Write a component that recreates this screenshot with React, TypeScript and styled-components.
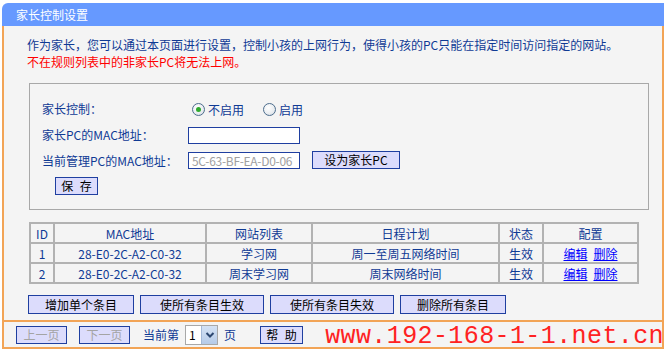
import styled, { createGlobalStyle } from 'styled-components';

const GlobalStyle = createGlobalStyle`
  html, body {
    margin: 0;
    padding: 0;
    background: #ffffff;
  }
  body {
    font-family: 'Noto Sans CJK SC', 'Liberation Sans', sans-serif;
    font-size: 12px;
  }
`;

const ORANGE = '#F2A456';
const TEXT_BLUE = '#0F3A94';

interface Rule {
  id: number;
  mac: string;
  site: string;
  schedule: string;
  status: string;
}

const rules: Rule[] = [
  { id: 1, mac: '28-E0-2C-A2-C0-32', site: '学习网', schedule: '周一至周五网络时间', status: '生效' },
  { id: 2, mac: '28-E0-2C-A2-C0-32', site: '周末学习网', schedule: '周末网络时间', status: '生效' },
];

function Radio({ checked, label }: { checked: boolean; label: string }) {
  return (
    <RadioLabel>
      <RadioDot $checked={checked} />
      {label}
    </RadioLabel>
  );
}

export default function App() {
  return (
    <>
      <GlobalStyle />
      <Frame>
        <Header>家长控制设置</Header>
        <Content>
          <Intro>
            <div>作为家长，您可以通过本页面进行设置，控制小孩的上网行为，使得小孩的PC只能在指定时间访问指定的网站。</div>
            <Warning>不在规则列表中的非家长PC将无法上网。</Warning>
          </Intro>

          <SettingsBox>
            <FieldRow>
              <FieldLabel>家长控制：</FieldLabel>
              <RadioGroup>
                <Radio checked label="不启用" />
                <Radio checked={false} label="启用" />
              </RadioGroup>
            </FieldRow>
            <FieldRow>
              <FieldLabel>家长PC的MAC地址：</FieldLabel>
              <TextInput />
            </FieldRow>
            <FieldRow>
              <FieldLabel>当前管理PC的MAC地址：</FieldLabel>
              <TextInput $disabled>5C-63-BF-EA-D0-06</TextInput>
              <Button $width={88} $gap={12}>设为家长PC</Button>
            </FieldRow>
            <SaveRow>
              <Button $width={43} $spaced>保 存</Button>
            </SaveRow>
          </SettingsBox>

          <RuleTable>
            <colgroup>
              <col style={{ width: 24 }} />
              <col style={{ width: 152 }} />
              <col style={{ width: 106 }} />
              <col style={{ width: 187 }} />
              <col style={{ width: 44 }} />
              <col style={{ width: 95 }} />
            </colgroup>
            <thead>
              <tr>
                <Cell>ID</Cell>
                <Cell>MAC地址</Cell>
                <Cell>网站列表</Cell>
                <Cell>日程计划</Cell>
                <Cell>状态</Cell>
                <Cell>配置</Cell>
              </tr>
            </thead>
            <tbody>
              {rules.map((r) => (
                <tr key={r.id}>
                  <Cell>{r.id}</Cell>
                  <Cell>{r.mac}</Cell>
                  <Cell>{r.site}</Cell>
                  <Cell>{r.schedule}</Cell>
                  <Cell>{r.status}</Cell>
                  <Cell>
                    <ActionLink>编辑</ActionLink>
                    <ActionLink>删除</ActionLink>
                  </Cell>
                </tr>
              ))}
            </tbody>
          </RuleTable>

          <ButtonBar>
            <Button $width={106} $height={17}>增加单个条目</Button>
            <Button $width={124} $height={17}>使所有条目生效</Button>
            <Button $width={124} $height={17}>使所有条目失效</Button>
            <Button $width={106} $height={17}>删除所有条目</Button>
          </ButtonBar>
        </Content>

        <Footer>
          <Button $width={51} $height={16} $disabled>上一页</Button>
          <Button $width={51} $height={16} $disabled $gap={12}>下一页</Button>
          <PageText $gap={13}>当前第</PageText>
          <PageSelect>
            <SelectValue>1</SelectValue>
            <SelectArrow>
              <svg width="10" height="8" viewBox="0 0 10 8">
                <path d="M1.5 2 L5 5.5 L8.5 2" fill="none" stroke="#2C4770" strokeWidth="2" />
              </svg>
            </SelectArrow>
          </PageSelect>
          <PageText $gap={6}>页</PageText>
          <Button $width={43} $height={16} $gap={18} $spaced>帮 助</Button>
          <Watermark>www.192-168-1-1.net.cn</Watermark>
        </Footer>
      </Frame>
    </>
  );
}

const Frame = styled.div`
  width: 662px;
  margin: 3px 0 0 2px;
  display: flex;
  flex-direction: column;
`;

const Header = styled.div`
  height: 23px;
  line-height: 23px;
  background: #6699ff;
  color: #ffffff;
  font-size: 12px;
  padding-left: 14px;
  border-top-left-radius: 6px;
`;

const Content = styled.div`
  background: #f4f4f4;
  border-left: 2px solid ${ORANGE};
  border-right: 2px solid ${ORANGE};
  border-bottom: 2px solid ${ORANGE};
  padding: 10px 0 10px 0;
  height: 274px;
`;

const Intro = styled.div`
  color: ${TEXT_BLUE};
  line-height: 17px;
  padding-left: 23px;
`;

const Warning = styled.div`
  color: #ff0000;
`;

const SettingsBox = styled.div`
  margin: 13px 0 0 25px;
  width: 606px;
  border: 1px solid #a8a8a8;
  padding: 11px 0 14px 12px;
`;

const FieldRow = styled.div`
  display: flex;
  align-items: center;
  height: 26px;
`;

const FieldLabel = styled.div`
  width: 146px;
  color: ${TEXT_BLUE};
`;

const RadioGroup = styled.div`
  display: flex;
  align-items: center;
  gap: 19px;
  padding-left: 4px;
  margin-top: 2px;
`;

const RadioLabel = styled.label`
  display: flex;
  align-items: center;
  gap: 3px;
  color: ${TEXT_BLUE};
`;

const RadioDot = styled.span<{ $checked: boolean }>`
  width: 11px;
  height: 11px;
  border-radius: 50%;
  border: 1px solid #4d6d8d;
  background: radial-gradient(circle at 40% 35%, #ffffff 0%, #e8ecf0 60%, #c9d2dc 100%);
  position: relative;

  &::after {
    content: '';
    display: ${(p) => (p.$checked ? 'block' : 'none')};
    position: absolute;
    left: 3px;
    top: 3px;
    width: 5px;
    height: 5px;
    border-radius: 50%;
    background: #2eaa2e;
  }
`;

const TextInput = styled.div<{ $disabled?: boolean }>`
  width: 112px;
  height: 17px;
  box-sizing: border-box;
  line-height: 15px;
  border: 1px solid #1f3fa0;
  background: #ffffff;
  color: #a0a0a0;
  padding-left: 3px;
  font-size: 12px;
  letter-spacing: -0.3px;
  white-space: nowrap;
  overflow: hidden;
  margin-top: ${(p) => (p.$disabled ? '0' : '2px')};
`;

const Button = styled.div<{
  $width: number;
  $height?: number;
  $disabled?: boolean;
  $gap?: number;
  $spaced?: boolean;
}>`
  width: ${(p) => p.$width}px;
  height: ${(p) => (p.$height ?? 16) + 2}px;
  line-height: ${(p) => p.$height ?? 16}px;
  margin-left: ${(p) => p.$gap ?? 0}px;
  box-sizing: border-box;
  flex-shrink: 0;
  border: 1px solid #1f3fa0;
  background: #dcdcfc;
  color: ${(p) => (p.$disabled ? '#a4a4a4' : '#000000')};
  text-align: center;
  font-size: 12px;
  white-space: pre;
  word-spacing: ${(p) => (p.$spaced ? '4px' : 'normal')};
`;

const SaveRow = styled.div`
  padding: 4px 0 0 13px;
`;

const RuleTable = styled.table`
  margin: 12px 0 0 25px;
  width: 608px;
  border-collapse: collapse;
  table-layout: fixed;
`;

const Cell = styled.td`
  height: 18px;
  padding: 0;
  border: 2px solid #b2b2b2;
  text-align: center;
  color: ${TEXT_BLUE};
  font-size: 12px;
  white-space: nowrap;
`;

const ActionLink = styled.a`
  color: #0000ff;
  text-decoration: underline;
  margin: 0 3px;
  cursor: pointer;
`;

const ButtonBar = styled.div`
  display: flex;
  gap: 6px;
  margin: 11px 0 0 24px;
`;

const Footer = styled.div`
  height: 25px;
  background: #f4f4f4;
  border-left: 2px solid ${ORANGE};
  border-right: 2px solid ${ORANGE};
  border-bottom: 2px solid ${ORANGE};
  display: flex;
  align-items: center;
  padding-left: 12px;
  overflow: hidden;
`;

const PageText = styled.span<{ $gap: number }>`
  color: ${TEXT_BLUE};
  margin-left: ${(p) => p.$gap}px;
  margin-right: 6px;
`;

const PageSelect = styled.div`
  width: 33px;
  height: 20px;
  box-sizing: border-box;
  border: 1px solid #a8a8a8;
  background: #ffffff;
  display: flex;
  align-items: stretch;
`;

const SelectValue = styled.div`
  flex: 1;
  padding-left: 3px;
  line-height: 18px;
  color: #000000;
`;

const SelectArrow = styled.div`
  width: 15px;
  background: linear-gradient(#d4e2f4, #b6cbe8);
  border-left: 1px solid #a3b9d8;
  display: flex;
  align-items: center;
  justify-content: center;
`;

const Watermark = styled.span`
  margin-left: auto;
  margin-right: -2px;
  font-family: 'Liberation Mono', monospace;
  font-size: 25px;
  letter-spacing: 0.4px;
  color: #ff2222;
  line-height: 22px;
  margin-top: 4px;
  white-space: nowrap;
`;
